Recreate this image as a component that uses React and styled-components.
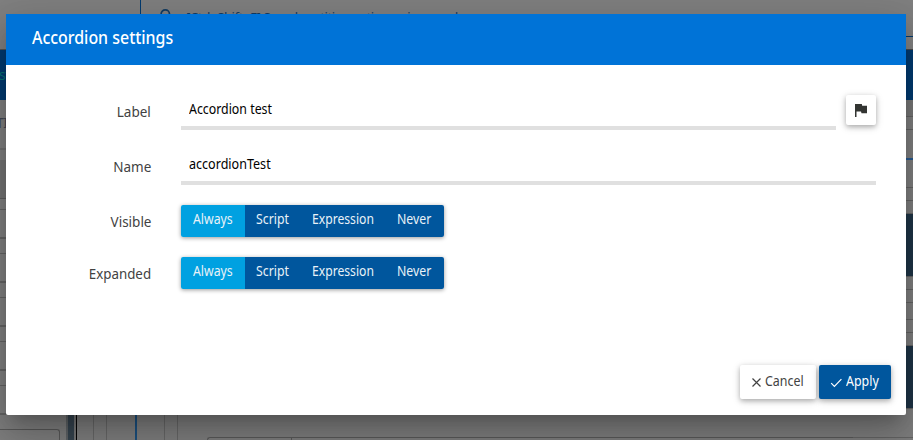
import React from "react";
import styled, { createGlobalStyle } from "styled-components";

const GlobalStyle = createGlobalStyle`
  * { box-sizing: border-box; }
  html, body { margin: 0; height: 100%; overflow: hidden; background: #808080; }
  body { font-family: "Noto Sans", "Open Sans", sans-serif; font-size: 13.5px; }
`;

const Screen = styled.div`
  position: relative;
  width: 913px;
  height: 440px;
  overflow: hidden;
`;

const Page = styled.div`
  display: grid;
  grid-template-columns: 60px 1fr 60px;
  height: 440px;
`;

const Rail = styled.div`
  display: flex;
  flex-direction: column;
  min-width: 0;
`;

const Strip = styled.div`
  flex: none;
  height: ${(p) => p.$h}px;
  background: ${(p) => p.$c};
  overflow: hidden;
  white-space: nowrap;
`;

const PanelCorner = styled.div`
  flex: 1;
  border-top: 1px solid #595959;
  border-right: 1px solid #595959;
  border-top-right-radius: 3px;
`;

const TabText = styled.div`
  margin: 16px 0 0 -1px;
  font-size: 14px;
  line-height: 18px;
  letter-spacing: -0.5px;
  color: #087574;
`;

const HeadingText = styled.div`
  margin: 14px 0 0 -4px;
  font-size: 14px;
  line-height: 18px;
  letter-spacing: -0.5px;
  color: #434754;
`;

const Center = styled.div`
  display: flex;
  flex-direction: column;
  justify-content: space-between;
`;

const TopBar = styled.div`
  display: flex;
  align-items: flex-start;
  height: 36px;
  margin-left: 80px;
  padding-left: 19px;
  border-left: 1px solid #003b70;
  color: #123c63;
`;

const SearchIcon = styled.svg`
  flex: none;
  width: 14px;
  height: 14px;
  margin-top: 8px;
`;

const SearchHint = styled.span`
  margin: 7px 0 0 12px;
  font-size: 13px;
  line-height: 20px;
  letter-spacing: -0.37px;
  white-space: nowrap;
`;

const BottomPanels = styled.div`
  display: flex;
  height: 40px;
`;

const Column = styled.div`
  flex: none;
  width: ${(p) => p.$w}px;
  background: ${(p) => p.$c};
`;

const Frame = styled.div`
  flex: 1;
  display: flex;
  margin: 37px -60px 0 29px;
  border: 1px solid #5b5b5b;
  border-right: 0;
  border-bottom: 0;
  border-top-left-radius: 4px;
`;

const FrameCell = styled.div`
  width: 84px;
  border-right: 1px solid #5b5b5b;
`;

const Dialog = styled.section`
  position: absolute;
  left: 6px;
  top: 14px;
  width: 900px;
  height: 401px;
  display: flex;
  flex-direction: column;
  background: #fff;
  border-radius: 0 0 2px 2px;
  box-shadow: 0 11px 15px -7px rgba(0, 0, 0, 0.2), 0 24px 38px 3px rgba(0, 0, 0, 0.14),
    0 9px 46px 8px rgba(0, 0, 0, 0.12);
`;

const Header = styled.header`
  flex: none;
  height: 51px;
  padding: 11px 26px;
  background: #0073d7;
  color: #fff;
  font-size: 17.5px;
  font-weight: 500;
  line-height: 24px;
`;

const Form = styled.div`
  flex: 1;
  display: flex;
  flex-direction: column;
  padding: 24px 30px 0 0;
`;

const Row = styled.div`
  display: grid;
  grid-template-columns: 145px 1fr;
  column-gap: 30px;
  height: ${(p) => p.$h}px;
`;

const Label = styled.label`
  padding-top: ${(p) => p.$top}px;
  text-align: right;
  color: #424242;
  font-size: 15px;
  line-height: 20px;
`;

const Fit = styled.span`
  display: inline-block;
  white-space: nowrap;
  transform: scaleX(${(p) => p.$x});
  transform-origin: ${(p) => p.$from || "left"} center;
`;

const FieldGroup = styled.div`
  display: flex;
  align-items: flex-start;
  gap: 10px;
`;

const Field = styled.div`
  flex: 1;
  height: 41px;
  padding: 10px 8px 0;
  border-bottom: 4px solid #e0e0e0;
  color: #000;
  line-height: 20px;
`;

const raised = "0 2px 5px rgba(0,0,0,.26), 0 2px 10px rgba(0,0,0,.12)";

const FlagButton = styled.button`
  display: grid;
  place-items: center;
  width: 30px;
  height: 30px;
  margin-top: 6px;
  padding: 0;
  border: 0;
  border-radius: 2px;
  background: #fff;
  box-shadow: ${raised};
`;

const Segments = styled.div`
  display: flex;
  width: 263px;
  height: 32px;
  border-radius: 2px;
  overflow: hidden;
  box-shadow: 0 1px 4px rgba(0, 0, 0, 0.4);
`;

const Segment = styled.button`
  flex: none;
  width: ${(p) => p.$w}px;
  padding: 0 0 4px ${(p) => p.$pad}px;
  border: 0;
  background: ${(p) => (p.$active ? "#00a1e1" : "#00569d")};
  color: #e9f2f8;
  font: inherit;
  line-height: 20px;
  text-align: left;
`;

const Footer = styled.footer`
  display: flex;
  justify-content: flex-end;
  gap: 3px;
  padding: 0 15px 16px;
`;

const Action = styled.button`
  display: flex;
  align-items: center;
  gap: 3px;
  width: ${(p) => p.$w}px;
  height: 34px;
  padding: 0 0 3px 11px;
  border: 0;
  border-radius: 2px;
  background: ${(p) => (p.$primary ? "#00569d" : "#fff")};
  color: ${(p) => (p.$primary ? "#fff" : "#424242")};
  box-shadow: ${raised};
  font: inherit;
`;

const ActionIcon = styled.svg`
  flex: none;
  width: ${(p) => p.$w}px;
  height: 11px;
  margin-top: 3px;
`;

const LINE = "#656565";
const PAGE = "#808080";
const rightStrips = [
  [36, PAGE], [1, "#003b70"], [12, "#848484"], [1, "#4b4b4b"], [50, "#003b72"],
  [16, "#787878"], [1, LINE], [12, PAGE], [1, LINE], [28, PAGE], [2, "#285b91"],
  [27, PAGE], [1, LINE], [12, PAGE], [1, LINE], [12, PAGE], [1, LINE],
  [62, "#1f3547"], [1, LINE], [12, PAGE], [1, LINE], [12, PAGE], [1, LINE],
  [16, PAGE], [1, LINE], [12, PAGE], [1, LINE], [12, PAGE], [1, LINE],
  [62, "#1f3547"], [1, LINE], [28, PAGE], [1, LINE], [2, PAGE],
];
const leftStrips = [
  [49, PAGE], [1, "#555"], [50, "#003b72", "tab"], [48, PAGE, "heading"], [2, "#727272"],
  [10, PAGE], [38, "#747474"], [1, "#5e5e5e"], [10, PAGE], [1, LINE],
  [27, PAGE], [2, LINE], [14, PAGE], [1, LINE], [27, PAGE], [2, LINE],
  [14, PAGE], [1, LINE], [27, PAGE], [2, LINE], [14, PAGE], [1, LINE],
  [27, PAGE], [2, LINE], [14, PAGE], [1, LINE], [27, PAGE], [2, LINE], [14, PAGE],
];
const columns = [
  [6, PAGE], [2, "#5f6366"], [6, "#36444f"], [2, "#777"], [1, "#000"], [16, PAGE],
  [1, "#696969"], [12, PAGE], [1, "#696969"], [28, PAGE], [2, "#1c5180"],
  [27, PAGE], [1, "#696969"], [12, PAGE], [1, "#696969"],
];

const options = [
  { text: "Always", w: 64, pad: 12, x: 0.91 },
  { text: "Script", w: 55, pad: 11, x: 0.91 },
  { text: "Expression", w: 85, pad: 12, x: 0.9 },
  { text: "Never", w: 59, pad: 12, x: 0.91 },
];

function Choice() {
  return (
    <Segments>
      {options.map((o, i) => (
        <Segment key={o.text} $w={o.w} $pad={o.pad} $active={i === 0}>
          <Fit $x={o.x}>{o.text}</Fit>
        </Segment>
      ))}
    </Segments>
  );
}

export default function App() {
  return (
    <Screen>
      <GlobalStyle />
      <Page>
        <Rail>
          {leftStrips.map(([h, c, kind], i) => (
            <Strip key={i} $h={h} $c={c}>
              {kind === "tab" && <TabText>st</TabText>}
              {kind === "heading" && <HeadingText>TI</HeadingText>}
            </Strip>
          ))}
          <PanelCorner />
        </Rail>
        <Center>
          <TopBar>
            <SearchIcon viewBox="0 0 14 14" fill="none" stroke="currentColor" strokeWidth="1.7">
              <circle cx="5.3" cy="6" r="4.2" />
              <path d="M8.5 9.2 13 13.5" />
            </SearchIcon>
            <SearchHint>[Ctrl+Shift+F] Search entities, actions, views and</SearchHint>
          </TopBar>
          <BottomPanels>
            {columns.map(([w, c], i) => (
              <Column key={i} $w={w} $c={c} />
            ))}
            <Frame>
              <FrameCell />
            </Frame>
          </BottomPanels>
        </Center>
        <Rail>
          {rightStrips.map(([h, c], i) => (
            <Strip key={i} $h={h} $c={c} />
          ))}
        </Rail>
      </Page>
      <Dialog role="dialog">
        <Header>
          <Fit $x={0.91}>Accordion settings</Fit>
        </Header>
        <Form>
          <Row $h={55}>
            <Label $top={12}><Fit $x={0.9} $from="right">Label</Fit></Label>
            <FieldGroup>
              <Field><Fit $x={0.915}>Accordion test</Fit></Field>
              <FlagButton aria-label="Translate">
                <svg width="12" height="13" viewBox="0 0 12 13">
                  <path d="M0 0h6.8l.4 1.8H12v7.4H6.5L6 7.5H1.5V13H0Z" fill="#333532" />
                </svg>
              </FlagButton>
            </FieldGroup>
          </Row>
          <Row $h={61}>
            <Label $top={12}><Fit $x={0.9} $from="right">Name</Fit></Label>
            <FieldGroup>
              <Field><Fit $x={0.93}>accordionTest</Fit></Field>
            </FieldGroup>
          </Row>
          <Row $h={52}>
            <Label $top={6}><Fit $x={0.9} $from="right">Visible</Fit></Label>
            <Choice />
          </Row>
          <Row $h={52}>
            <Label $top={6}><Fit $x={0.89} $from="right">Expanded</Fit></Label>
            <Choice />
          </Row>
        </Form>
        <Footer>
          <Action $w={76}>
            <ActionIcon $w={11} viewBox="0 0 11 11" fill="none" stroke="currentColor" strokeWidth="1.2">
              <path d="M1.5 1.5l8 8M9.5 1.5l-8 8" />
            </ActionIcon>
            <Fit $x={0.92}>Cancel</Fit>
          </Action>
          <Action $w={72} $primary>
            <ActionIcon $w={13} viewBox="0 0 13 11" fill="none" stroke="currentColor" strokeWidth="1.2">
              <path d="M1.2 6.2l3.2 3.2 7-7.2" />
            </ActionIcon>
            <Fit $x={0.92}>Apply</Fit>
          </Action>
        </Footer>
      </Dialog>
    </Screen>
  );
}
